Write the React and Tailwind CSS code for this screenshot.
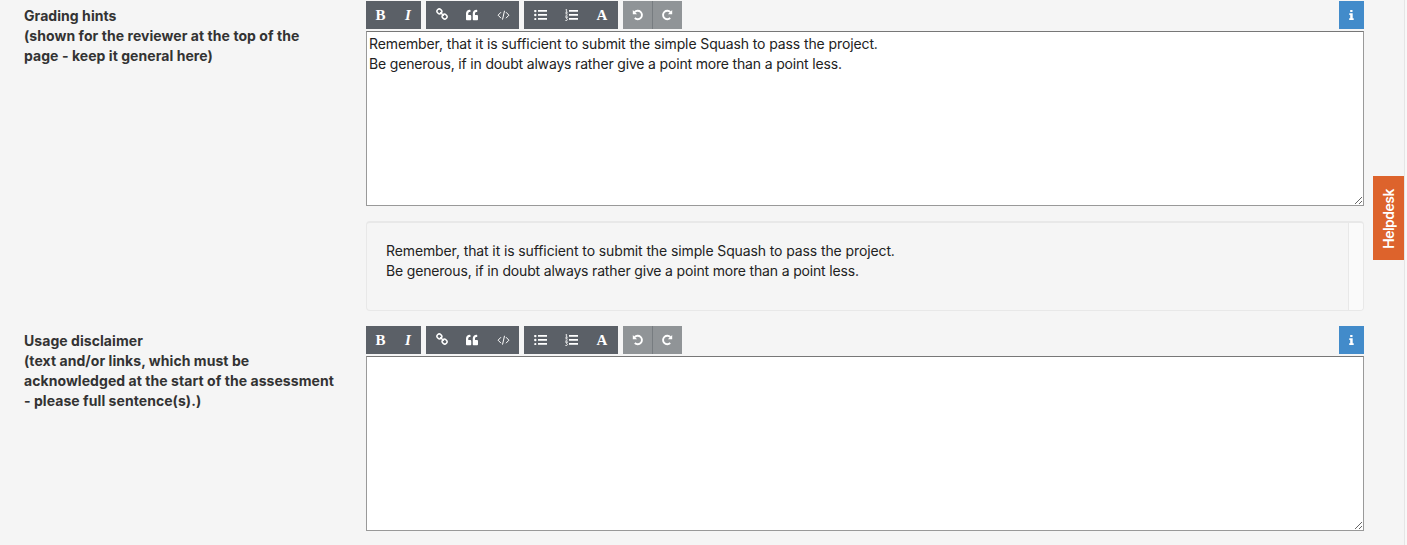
import React from "react";
import { FaQuoteLeft } from "react-icons/fa";

function LinkIcon() {
  return (
    <svg width="12" height="12" viewBox="0 0 12 12" fill="none" stroke="currentColor" strokeWidth="1.5">
      <rect x="1" y="1.2" width="4.8" height="4.4" rx="2" transform="rotate(45 3.4 3.4)" />
      <rect x="6.2" y="6.4" width="4.8" height="4.4" rx="2" transform="rotate(45 8.6 8.6)" />
      <path d="M4.2 4.2l3.6 3.6" />
    </svg>
  );
}

function CodeIcon() {
  return (
    <svg width="13" height="12" viewBox="0 0 13 12" fill="none" stroke="currentColor" strokeWidth="1">
      <path d="M4 3.2L1.1 6.2 4 9.2M9 3.2L11.900 6.2 9 9.2M7.500 1.800L5.5 10.6" />
    </svg>
  );
}

function BulletsIcon() {
  return (
    <svg width="13" height="10" viewBox="0 0 13 10" fill="currentColor">
      <path d="M4 0h9v1.800H4zM4 4h9v1.800H4zM4 8h9v1.800H4z" />
      <circle cx="1.3" cy="1" r="1.2" />
      <circle cx="1.3" cy="5" r="1.2" />
      <circle cx="1.3" cy="9" r="1.1" />
    </svg>
  );
}

function NumbersIcon() {
  return (
    <svg width="13" height="12" viewBox="0 0 13 12" fill="currentColor">
      <path d="M4 1h9v1.800H4zM4 5h9v1.800H4zM4 9h9v1.800H4z" />
      <path d="M.5.9L1.6.3v3M.4 3.3h2.3M.4 4.8q2-.9 2 .2 0 .6-1.9 2.2h2.2M.4 8.4h2L1.4 9.7q1.2 0 1.1 1-.2 1.2-2.2.7" fill="none" stroke="currentColor" strokeWidth=".8" />
    </svg>
  );
}

function TurnIcon({ flip }) {
  return (
    <svg width="12" height="12" viewBox="0 0 12 12" className={flip ? "-scale-x-100" : ""}>
      <path d="M2.6 3.2A4.2 4.2 0 1 1 2.8 9" fill="none" stroke="currentColor" strokeWidth="1.9" />
      <path d="M.8.9v4.3h4.3z" fill="currentColor" />
    </svg>
  );
}

function Tool({ label, className = "", children }) {
  return (
    <button aria-label={label} className={"flex h-7 items-center justify-center " + className}>
      {children}
    </button>
  );
}

const glyph = "font-['Liberation_Serif',serif] text-[15px] leading-none font-bold";

function Toolbar() {
  return (
    <div className="flex h-7 gap-[5px] text-white">
      <div className="flex w-[55px] bg-[#5b6067]">
        <Tool label="Bold" className="w-[29px]"><span className={glyph}>B</span></Tool>
        <Tool label="Italic" className="w-[26px]"><span className={glyph + " italic"}>I</span></Tool>
      </div>
      <div className="flex w-[93px] bg-[#5b6067]">
        <Tool label="Link" className="w-[31px] pb-0.5"><LinkIcon /></Tool>
        <Tool label="Quote" className="w-[30px] pb-px"><FaQuoteLeft size={12} /></Tool>
        <Tool label="Code" className="w-[32px]"><CodeIcon /></Tool>
      </div>
      <div className="flex w-[94px] bg-[#5b6067]">
        <Tool label="Bulleted list" className="w-[33px]"><BulletsIcon /></Tool>
        <Tool label="Numbered list" className="w-[29px]"><NumbersIcon /></Tool>
        <Tool label="Heading" className="w-[32px]"><span className={glyph}>A</span></Tool>
      </div>
      <div className="flex w-[59px] bg-[#909497]">
        <Tool label="Undo" className="w-[30px] border-r border-[#777c80] pb-px"><TurnIcon /></Tool>
        <Tool label="Redo" className="w-[29px] pr-px pb-px"><TurnIcon flip /></Tool>
      </div>
      <button aria-label="Info" className="ml-auto flex w-[25px] items-center justify-center bg-[#428bca]">
        <svg width="5" height="10" viewBox="0 0 5 10" fill="currentColor">
          <path d="M1.2 0h2.3v2H1.2zM.3 3.3h3.4v5h1V10H.2V8.300h1V5H.3z" />
        </svg>
      </button>
    </div>
  );
}

const hints = [
  { text: "Remember, that it is sufficient to submit the simple Squash to pass the project.", tracking: "tracking-[-0.11px]" },
  { text: "Be generous, if in doubt always rather give a point more than a point less.", tracking: "tracking-[-0.17px]" },
];

function Lines({ lines }) {
  return lines.map(({ text, tracking }) => (
    <div key={text} className={"whitespace-nowrap " + tracking}>{text}</div>
  ));
}

function Editor({ lines }) {
  return (
    <div className="w-[998px]">
      <Toolbar />
      <div className="relative mt-0.5 h-[175px]">
        <div
          role="textbox"
          aria-multiline="true"
          contentEditable
          suppressContentEditableWarning
          spellCheck={false}
          className="h-full w-full border border-[#999] border-t-[#777] bg-white p-0.5 outline-none"
        >
          <Lines lines={lines} />
        </div>
        <svg className="absolute right-[2px] bottom-[2px]" width="7" height="7" viewBox="0 0 7 7" stroke="#555" strokeWidth=".9">
          <path d="M0 7L7 0M4 7L7 4" />
        </svg>
      </div>
    </div>
  );
}

function Label({ lines }) {
  return (
    <div className="w-[342px] shrink-0 pt-[5px] font-bold tracking-[0.06px] whitespace-nowrap text-[#333]">
      {lines.map((line) => <div key={line}>{line}</div>)}
    </div>
  );
}

export default function App() {
  return (
    <div className="flex h-[545px] overflow-hidden bg-[#f5f5f5] font-['Inter',sans-serif] text-[14px] leading-5 text-[#222]">
      <main className="w-[1364px] shrink-0 pt-px pl-6">
        <section className="flex h-[325px]">
          <Label lines={["Grading hints", "(shown for the reviewer at the top of the", "page - keep it general here)"]} />
          <div>
            <Editor lines={hints} />
            <div className="mt-[15px] flex h-[90px] w-[998px] overflow-hidden rounded-[4px] border border-t-2 border-[#e8e8e8]">
              <div className="grow pt-[18px] pl-[19px]">
                <Lines lines={hints} />
              </div>
              <div className="w-[15px] border-l border-[#e8e8e8] bg-[#fafafa]" />
            </div>
          </div>
        </section>
        <section className="flex">
          <Label lines={["Usage disclaimer", "(text and/or links, which must be", "acknowledged at the start of the assessment", "- please full sentence(s).)"]} />
          <Editor lines={[]} />
        </section>
      </main>
      <aside className="w-10 shrink-0 pt-44 pl-[9px]">
        <button className="flex h-[84px] w-[31px] items-center justify-center bg-[#dd632c] pt-0.5 text-white">
          <span className="rotate-180 text-[14px] leading-none font-semibold tracking-[-0.5px] [writing-mode:vertical-rl]">Helpdesk</span>
        </button>
      </aside>
      <div className="w-[3px] border-l border-[#e5e5e5] bg-[#f8f8f8]" />
    </div>
  );
}
